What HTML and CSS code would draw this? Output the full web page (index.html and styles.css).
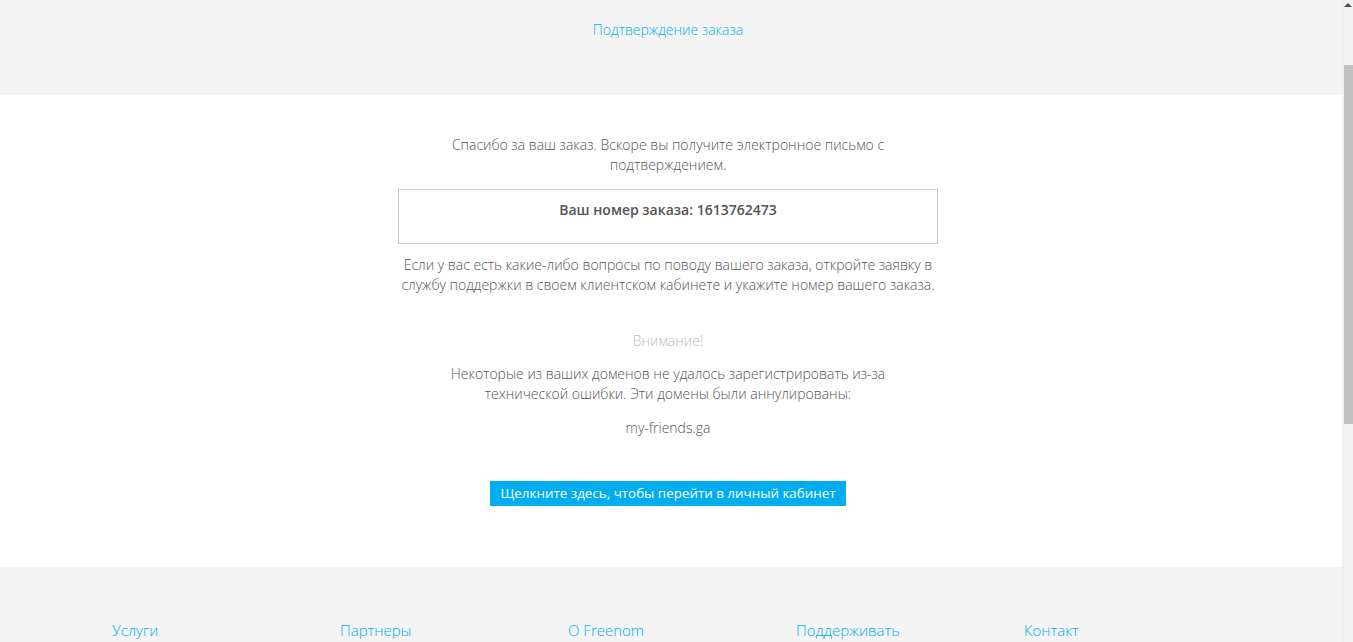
FILE: index.html
```html
<!DOCTYPE html>
<html lang="ru">
<head>
  <meta charset="UTF-8" />
  <meta name="viewport" content="width=device-width, initial-scale=1.0"/>
  <title>Подтверждение заказа</title>
  <link rel="stylesheet" href="styles.css">
</head>
<body>

  <div class="page">
    <div class="heading">
      <a href="#" class="heading-link">Подтверждение заказа</a>
    </div>

    <div class="content">
      <p class="narrow">Спасибо за ваш заказ. Вскоре вы получите электронное письмо с подтверждением.</p>

      <div class="order-box">
        <strong>Ваш номер заказа: 1613762473</strong>
      </div>

      <p class="wide">Если у вас есть какие-либо вопросы по поводу вашего заказа, откройте заявку в службу поддержки в своем клиентском кабинете и укажите номер вашего заказа.</p>

      <p class="notice">Внимание!</p>
      <p class="narrow tight">Некоторые из ваших доменов не удалось зарегистрировать из-за технической ошибки. Эти домены были аннулированы:</p>
      <p class="domain">my-friends.ga</p>

      <a href="#" class="button">Щелкните здесь, чтобы перейти в личный кабинет</a>
    </div>

    <div class="footer">
      <div class="footer-cols">
        <a href="#">Услуги</a>
        <a href="#">Партнеры</a>
        <a href="#">O Freenom</a>
        <a href="#">Поддерживать</a>
        <a href="#">Контакт</a>
      </div>
    </div>
  </div>

  <div class="scrollbar">
    <div class="arrow"></div>
    <div class="thumb"></div>
  </div>

</body>
</html>
```

FILE: styles.css
```css
html, body {
  height: 100%;
}
body {
  margin: 0;
  padding: 0;
  font-family: "Open Sans", "Noto Sans", sans-serif;
  font-weight: 300;
  font-size: 14px;
  line-height: 20px;
  color: #555;
  overflow: hidden;
}
a {
  text-decoration: none;
  color: #00aeef;
}
.page {
  margin-right: 11px;
}
.heading {
  background-color: #f4f4f4;
  height: 95px;
  box-sizing: border-box;
  padding: 20px 6px 0 0;
  text-align: center;
}
.content {
  background-color: #fff;
  padding: 40px 6px 61px 0;
  display: flex;
  flex-direction: column;
  align-items: center;
  text-align: center;
}
.content p {
  margin: 0;
}
.narrow {
  width: 450px;
}
.order-box {
  width: 540px;
  box-sizing: border-box;
  border: 1px solid #ccc;
  margin-top: 14px;
  padding: 10px 10px 23px;
}
.order-box strong {
  font-weight: 600;
}
.wide {
  width: 540px;
  margin-top: 11px !important;
}
.notice {
  color: #bbb;
  margin-top: 36px !important;
}
.tight {
  margin-top: 13px !important;
}
.domain {
  margin-top: 14px !important;
}
.button {
  margin-top: 43px;
  display: block;
  background-color: #00aeef;
  color: #fff;
  font-weight: 400;
  font-size: 13.4px;
  line-height: 25px;
  padding: 0 10px;
}
.footer {
  background-color: #f4f4f4;
  padding: 53px 6px 40px 0;
}
.footer-cols {
  width: 1140px;
  margin: 0 auto;
  display: grid;
  grid-template-columns: repeat(5, 1fr);
}
.footer-cols a {
  padding-left: 14px;
  font-size: 15px;
}
.scrollbar {
  position: fixed;
  top: 0;
  right: 0;
  width: 11px;
  height: 100%;
  background-color: #f1f1f1;
}
.arrow {
  margin: 3px auto 0;
  width: 0;
  height: 0;
  border-left: 4px solid transparent;
  border-right: 4px solid transparent;
  border-bottom: 4px solid #505050;
}
.thumb {
  position: absolute;
  top: 65px;
  left: 2px;
  right: 0;
  height: 359px;
  background-color: #c1c1c1;
}
```
